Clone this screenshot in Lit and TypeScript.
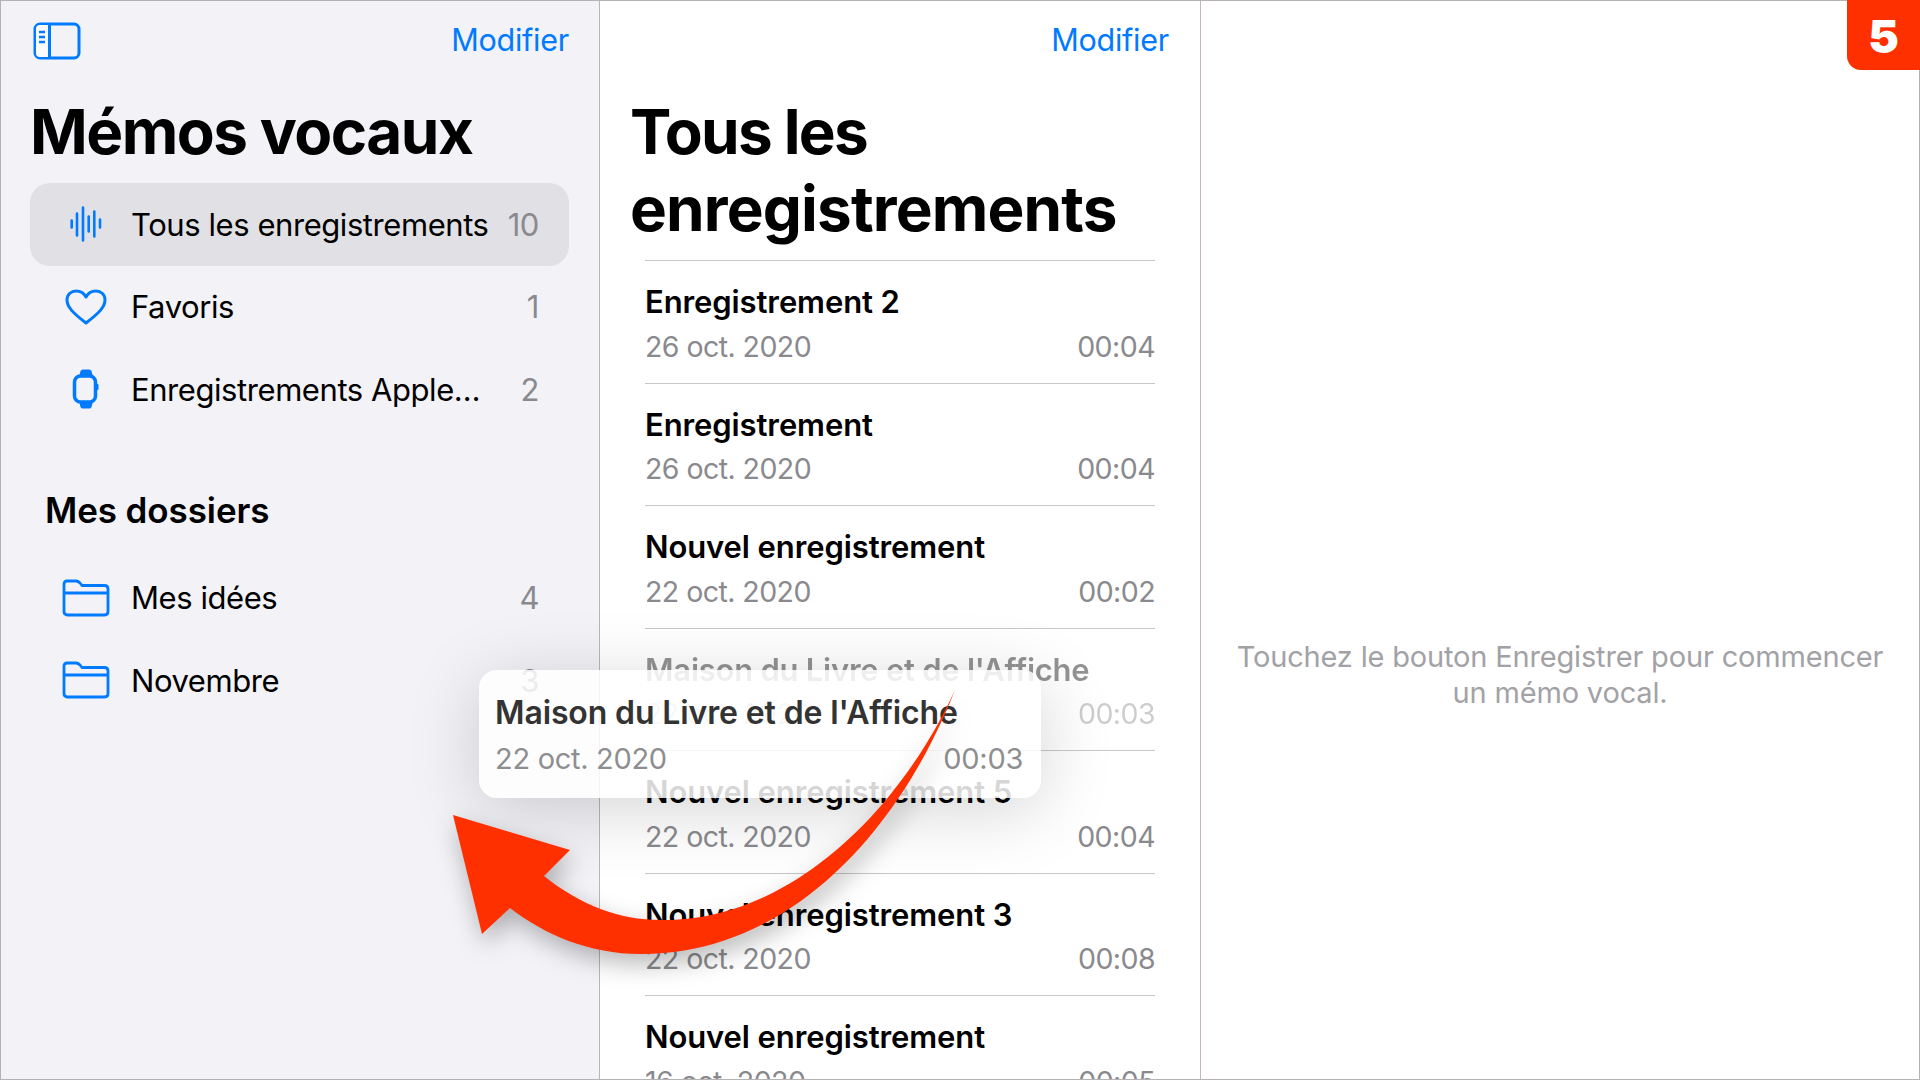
import { LitElement, html, css, svg } from "lit";
import { customElement } from "lit/decorators.js";

const wave = svg`<svg class="ic" width="42" height="40" viewBox="0 0 42 40"><g stroke="#007aff" stroke-width="2.600" stroke-linecap="round"><path d="M6.700 16.500v7M12 9.500v22M18 3.500v33M23.700 12.500v15M29.300 7.500v25M35 15.500v8"/></g></svg>`;
const heart = svg`<svg class="ic" width="44" height="38" viewBox="0 0 44 38"><path d="M22 35C9 25 3 19 3 12C3 6 7.500 3 12 3C16 3 20 5 22 9C24 5 28 3 32 3C36.500 3 41 6 41 12C41 19 35 25 22 35Z" fill="none" stroke="#007aff" stroke-width="3" stroke-linejoin="round"/></svg>`;
const watch = svg`<svg class="ic" width="28" height="40" viewBox="0 0 28 40"><path d="M7 8L8.500 2Q9 0.500 11 0.500H17Q19 0.500 19.500 2L21 8ZM7 32L8.500 38Q9 39.500 11 39.500H17Q19 39.500 19.500 38L21 32Z" fill="#007aff"/><rect x="2.500" y="7" width="21" height="26" rx="6" fill="none" stroke="#007aff" stroke-width="3.500"/><rect x="24" y="15" width="2.500" height="6" rx="1" fill="#007aff"/></svg>`;
const folder = svg`<svg class="ic" width="48" height="38" viewBox="0 0 48 38"><path d="M2 9V5Q2 2 5 2H14Q16 2 18 4L20 6.500H42.500Q46 6.500 46 10V32.500Q46 36 42.500 36H5.500Q2 36 2 32.500ZM2 14H46" fill="none" stroke="#007aff" stroke-width="2.800" stroke-linejoin="round"/></svg>`;
const panel = svg`<svg width="48" height="38" viewBox="0 0 48 38"><rect x="2" y="2" width="44" height="34" rx="5" fill="none" stroke="#007aff" stroke-width="3"/><path d="M3 7Q3 3 7 3H16V35H7Q3 35 3 31Z" fill="#fbfbfd"/><path d="M16.500 2V36" stroke="#007aff" stroke-width="3"/><path d="M6 10H12M6 15H12M6 20H12" stroke="#007aff" stroke-width="2.400"/></svg>`;

const smart = [
  { icon: wave, label: "Tous les enregistrements", n: "10", sel: true },
  { icon: heart, label: "Favoris", n: "1", sel: false },
  { icon: watch, label: "Enregistrements Apple…", n: "2", sel: false },
];
const folders = [
  { icon: folder, label: "Mes idées", n: "4", sel: false },
  { icon: folder, label: "Novembre", n: "3", sel: false },
];
const memos = [
  { t: "Enregistrement 2", d: "26 oct. 2020", l: "00:04" },
  { t: "Enregistrement", d: "26 oct. 2020", l: "00:04" },
  { t: "Nouvel enregistrement", d: "22 oct. 2020", l: "00:02" },
  { t: "Maison du Livre et de l'Affiche", d: "22 oct. 2020", l: "00:03", ghost: true },
  { t: "Nouvel enregistrement 5", d: "22 oct. 2020", l: "00:04" },
  { t: "Nouvel enregistrement 3", d: "22 oct. 2020", l: "00:08" },
  { t: "Nouvel enregistrement", d: "16 oct. 2020", l: "00:05" },
];

@customElement("app-root")
export class AppRoot extends LitElement {
  static styles = css`
    :host { display: block; width: 1920px; height: 1080px; position: relative; overflow: hidden;
      font-family: Inter, "Liberation Sans", sans-serif; color: #000; background: #fff; }
    * { box-sizing: border-box; }
    .frame { width: 1920px; height: 1080px; display: grid; grid-template-columns: 599px 601px 718px;
      border: 1px solid #b4b2b2; overflow: hidden; }
    .side { background: #f2f2f7; border-right: 1px solid #bdb4b4; padding: 0 30px 0 29px; height: 1078px; }
    .mid { border-right: 1px solid #c4b8b8; padding: 0 31px 0 30px; height: 1078px; overflow: hidden; }
    .bar { height: 79px; display: flex; align-items: center; justify-content: space-between; }
    .side .bar { padding: 0 0 0 3px; }
    .mid .bar { justify-content: flex-end; }
    .edit { color: #007aff; font-size: 30.500px; letter-spacing: -0.250px; padding-bottom: 2px; }
    h1 { margin: 0; font-size: 62px; line-height: 77px; font-weight: 700; }
    .side h1 { height: 103px; padding-top: 13px; letter-spacing: -1.500px; }
    .mid h1 { padding-top: 13px; height: 180px; letter-spacing: -1.750px; }
    .wide { letter-spacing: -0.850px; }
    .row { height: 82.500px; display: flex; align-items: center; border-radius: 20px; font-size: 31px; letter-spacing: -0.430px; }
    .row.sel { background: #e0e0e5; }
    .slot { width: 101px; display: flex; justify-content: center; padding-left: 11px; flex: none; }
    .lab { flex: 1; }
    .n { color: #8a8a8e; padding-right: 30px; }
    h2 { margin: 0; font-size: 35px; font-weight: 600; letter-spacing: -0.100px; padding: 58px 0 0 15px; height: 126px; }
    .memo { margin: 0 14px 0 15px; height: 122.550px; border-top: 1px solid #c8c8ca; padding-top: 22px; }
    .ghost { opacity: .42; }
    .ttl { font-size: 31px; font-weight: 600; letter-spacing: -0.100px; line-height: 38px; white-space: nowrap; }
    .ghost .ttl { letter-spacing: -0.250px; }
    .meta { display: flex; justify-content: space-between; color: #8a8a8e; font-size: 28.500px; letter-spacing: -0.550px; line-height: 38px; margin-top: 6.500px; }
    .hint { display: flex; align-items: center; justify-content: center; text-align: center; height: 1078px;
      color: #a2a2a6; font-size: 29px; line-height: 36px; letter-spacing: -0.170px; padding: 270px 0 0 0; }
    .card { position: absolute; left: 479px; top: 670px; width: 562px; height: 128px; padding: 0 18px 0 16px;
      border-radius: 18px; background: rgba(255,255,255,.84); box-shadow: 0 12px 70px rgba(0,0,0,.17); }
    .card .ttl { color: #333; padding-top: 24px; font-size: 32px; letter-spacing: -0.130px; }
    .card .meta { color: #8e8e90; margin-top: 8px; font-size: 29px; letter-spacing: -0.300px; }
    .arrow { position: absolute; left: 0; top: 0; filter: drop-shadow(3px 10px 12px rgba(0,0,0,.28)); }
    .badge { position: absolute; right: 0; top: 0; width: 73px; height: 70px; background: #ff3000; color: #fff;
      border-bottom-left-radius: 14px; font-weight: 900; font-size: 46px; line-height: 72px; text-align: center; }
  `;

  private row(r: any) {
    return html`<div class="row ${r.sel ? "sel" : ""}"><span class="slot">${r.icon}</span><span class="lab">${r.label}</span><span class="n">${r.n}</span></div>`;
  }

  render() {
    return html`
      <div class="frame">
        <section class="side">
          <div class="bar">${panel}<span class="edit">Modifier</span></div>
          <h1>Mémos vocaux</h1>
          ${smart.map((r) => this.row(r))}
          <h2>Mes dossiers</h2>
          ${folders.map((r) => this.row(r))}
        </section>
        <section class="mid">
          <div class="bar"><span class="edit">Modifier</span></div>
          <h1>Tous les<br /><span class="wide">enregistrements</span></h1>
          ${memos.map((m) => html`
            <div class="memo">
              <div class="${m.ghost ? "ghost" : ""}">
                <div class="ttl">${m.t}</div>
                <div class="meta"><span>${m.d}</span><span>${m.l}</span></div>
              </div>
            </div>`)}
        </section>
        <section class="hint"><div>Touchez le bouton Enregistrer pour commencer<br />un mémo vocal.</div></section>
      </div>
      <div class="card">
        <div class="ttl">Maison du Livre et de l'Affiche</div>
        <div class="meta"><span>22 oct. 2020</span><span>00:03</span></div>
      </div>
      <svg class="arrow" width="1920" height="1080" viewBox="0 0 1920 1080">
        <path d="M453 815L570 850L544 876C580 905 620 920 660 920C790 922 900 810 955 690C900 830 790 955 640 954C590 954 545 935 510 908L482 934Z" fill="#ff3000"/>
      </svg>
      <div class="badge">5</div>
    `;
  }
}
